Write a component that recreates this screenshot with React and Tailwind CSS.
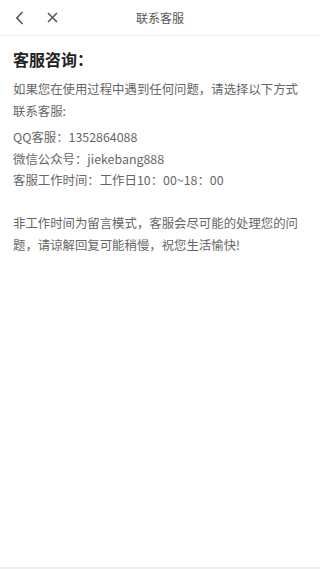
export default function App() {
  const font = { fontFamily: '"Noto Sans CJK SC", "Noto Sans", sans-serif' };
  return (
    <div
      className="h-[569px] w-[320px] bg-white flex flex-col border-b-2 border-[#eeeeee]"
      style={font}
    >
      {/* Header */}
      <div className="relative h-9 shrink-0 flex items-center border-b border-[#eeeeee]">
        <button className="ml-[13px] w-[12px] h-[14px] flex items-center justify-center text-[#555]">
          <svg width="9" height="14" viewBox="0 0 9 14" fill="none">
            <path d="M7.5 1L1.8 7l5.7 6" stroke="currentColor" strokeWidth="1.6" />
          </svg>
        </button>
        <button className="ml-[21px] w-[12px] h-[12px] flex items-center justify-center text-[#555]">
          <svg width="11" height="11" viewBox="0 0 11 11" fill="none">
            <path d="M1 1l9 9M10 1l-9 9" stroke="currentColor" strokeWidth="1.5" />
          </svg>
        </button>
        <div className="absolute inset-0 flex items-center justify-center pointer-events-none">
          <span className="text-[12px] text-[#555]">联系客服</span>
        </div>
      </div>

      {/* Content */}
      <div className="px-[13px] pt-3">
        <h1 className="text-[16px] leading-[22px] font-bold text-[#222]">客服咨询：</h1>
        <p className="mt-[9px] text-[12.4px] leading-[21.5px] text-[#666]">
          如果您在使用过程中遇到任何问题，请选择以下方式联系客服:
        </p>
        <div className="mt-[5px] text-[12.4px] leading-[21.5px] text-[#666]">
          <p>QQ客服：1352864088</p>
          <p>微信公众号：jiekebang888</p>
          <p>客服工作时间：工作日10：00~18：00</p>
        </div>
        <p className="mt-[21.5px] text-[12.4px] leading-[21.5px] text-[#666]">
          非工作时间为留言模式，客服会尽可能的处理您的问题，请谅解回复可能稍慢，祝您生活愉快!
        </p>
      </div>
    </div>
  );
}
